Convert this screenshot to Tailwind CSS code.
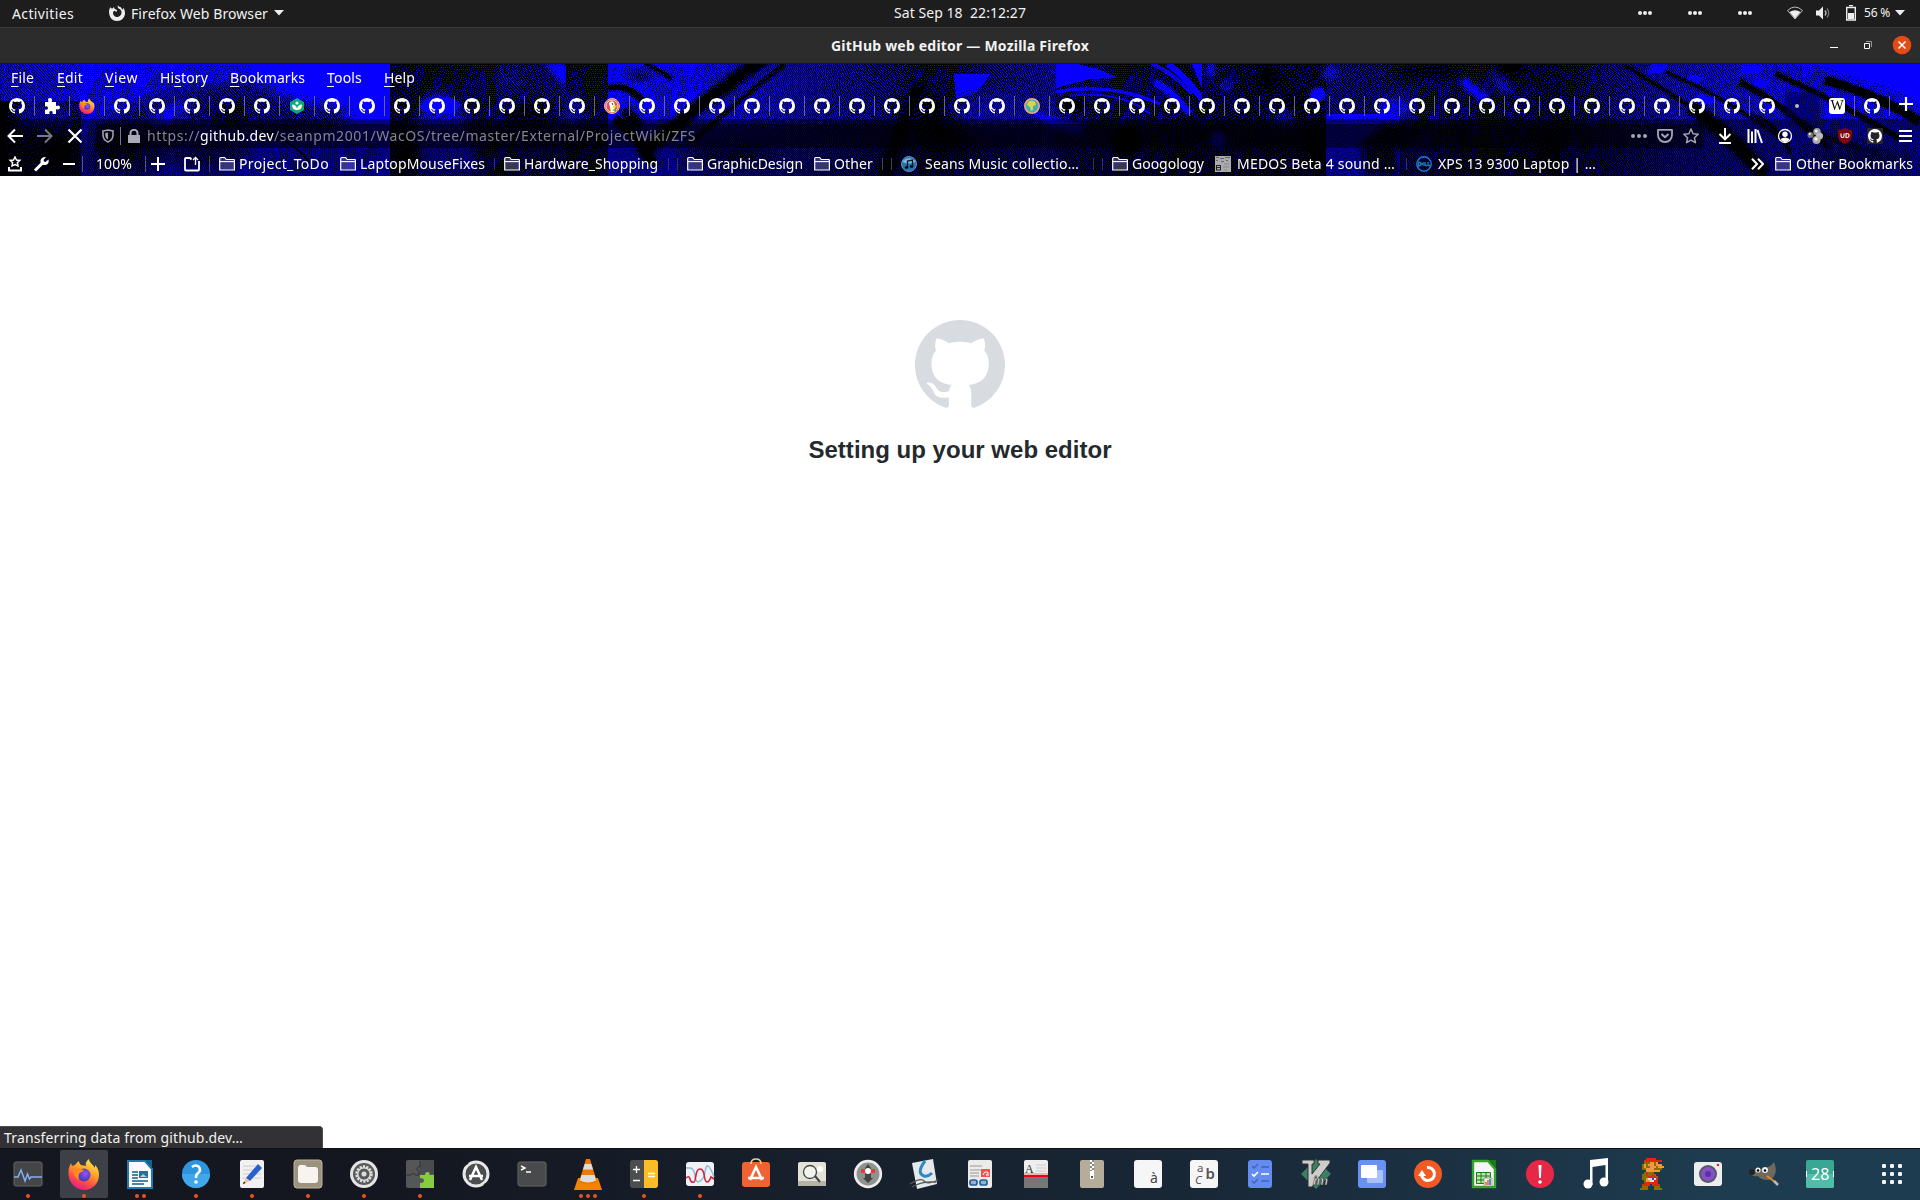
<!DOCTYPE html>
<html lang="en">
<head>
<meta charset="utf-8">
<title>GitHub web editor</title>
<script src="https://cdn.jsdelivr.net/npm/@tailwindcss/browser@4"></script>
</head>
<body class="w-[1920px] h-[1200px] overflow-hidden flex flex-col bg-white text-[14px] text-[#f2f2f2] font-['Noto_Sans',sans-serif]">

<svg class="absolute size-0">
  <symbol id="gh" viewBox="0 0 16 16"><path d="M8 0C3.58 0 0 3.58 0 8c0 3.54 2.29 6.53 5.47 7.59.4.07.55-.17.55-.38 0-.19-.01-.82-.01-1.49-2.01.37-2.53-.49-2.69-.94-.09-.23-.48-.94-.82-1.13-.28-.15-.68-.52-.01-.53.63-.01 1.08.58 1.23.82.72 1.21 1.87.87 2.33.66.07-.52.28-.87.51-1.07-1.78-.2-3.64-.89-3.64-3.95 0-.87.31-1.59.82-2.15-.08-.2-.36-1.02.08-2.12 0 0 .67-.21 2.2.82.64-.18 1.32-.27 2-.27s1.36.09 2 .27c1.53-1.04 2.2-.82 2.2-.82.44 1.1.16 1.92.08 2.12.51.56.82 1.27.82 2.15 0 3.07-1.87 3.75-3.65 3.95.29.25.54.73.54 1.48 0 1.07-.01 1.93-.01 2.2 0 .21.15.46.55.38A8.01 8.01 0 0 0 16 8c0-4.42-3.58-8-8-8z"/></symbol>
  <symbol id="folder" viewBox="0 0 16 16"><path d="M.7 14V2.500c0-.6.3-1 1-1h4l1.500 2h7.600c.4 0 .6.3.6.7V14z" fill="#8c8cc860" stroke="#fff" stroke-width="1.200"/><path d="M1 5.600h14.400" stroke="#fff" stroke-width="1.100"/></symbol>
  <linearGradient id="fx" x1=".8" y1="0" x2=".3" y2="1"><stop offset="0" stop-color="#fff04a"/><stop offset=".4" stop-color="#ffa02a"/><stop offset=".7" stop-color="#ff4f45"/><stop offset="1" stop-color="#e8168c"/></linearGradient>
  <radialGradient id="fp" cx=".6" cy=".4"><stop offset="0" stop-color="#8f58f0"/><stop offset="1" stop-color="#4f3cc0"/></radialGradient>
  <symbol id="firefox" viewBox="0 0 32 32"><path d="M21 1c-3 2-4 5-3 7l-5-1c-1-1-2-2-2-4-2 1-3 3-4 4L4 8 3 5C0 10 0 15 1 20c2 7 8 12 15 12 9 0 15-7 15-15 0-4-1-7-4-10l0 3C25 6 21 5 21 1z" fill="url(#fx)"/><circle cx="16" cy="17" r="6.500" fill="url(#fp)"/><path d="M5 11c4-2 7 0 11 1-1 2-4 2-5 4 0 1-1 4 0 6-4-2-6-6-6-11z" fill="#ff8a22"/></symbol>
</svg>

<!-- shell top bar -->
<header class="h-7 shrink-0 bg-[#1d1d1d] border-b border-[#3b3b3b] flex items-center pb-px">
  <span data-fit="62" class="ml-3 w-[97px]">Activities</span>
  <svg class="size-4 mr-[6px]" viewBox="0 0 16 16"><path d="M9 0c-.6 1.500-.3 2.700.5 3.500 2 .5 3.200 2.200 3 4.200C12.300 10.300 10.300 12 8 12s-4-1.700-4-4c0-1 .5-2 1.500-2.300L7.500 7 8 5 5.500 3.800 5 2 3.500 3.500 2 3.200 1.500 2C-.5 5-.3 9 1.200 12c1.300 2.400 4 4 6.800 4 4.500 0 8-3.500 8-8 0-2-.7-4-2-5.200L13.800 5 11.500 2C10 2 9 1 9 0z" fill="#eee"/></svg>
  <span data-fit="137" class="w-[143px]">Firefox Web Browser</span>
  <svg class="w-[10px] h-[6px]" viewBox="0 0 10 6"><path d="M0 0h10L5 5.500z" fill="#eee"/></svg>
  <span data-fit="132" class="ml-[610px] w-[132px] whitespace-pre pb-px">Sat Sep 18  22:12:27</span>
  <svg class="ml-[612px] w-[114px] h-1" viewBox="0 0 114 4" fill="#eee"><circle cx="2" cy="2" r="2"/><circle cx="7" cy="2" r="2"/><circle cx="12" cy="2" r="2"/><circle cx="52" cy="2" r="2"/><circle cx="57" cy="2" r="2"/><circle cx="62" cy="2" r="2"/><circle cx="102" cy="2" r="2"/><circle cx="107" cy="2" r="2"/><circle cx="112" cy="2" r="2"/></svg>
  <svg class="ml-[35px] w-4 h-[14px]" viewBox="0 0 16 14"><path d="M.5 4.500Q8-2.500 15.500 4.500L8 13z" fill="none" stroke="#bbb"/><path d="M2.500 6Q8 2.500 13.500 6L8 12.500z" fill="#eee"/></svg>
  <svg class="ml-3 w-4 h-[14px]" viewBox="0 0 16 14"><path d="M1 4.500h3L8 .5v13l-4-4H1z" fill="#eee"/><path d="M10 4.500q2 2.500 0 5" fill="none" stroke="#bbb" stroke-width="1.300"/><path d="M12 2.500q3.500 4.500 0 9" fill="none" stroke="#777" stroke-width="1.300"/></svg>
  <svg class="ml-[15px] w-[10px] h-4" viewBox="0 0 10 16"><path d="M3 .5h4M.7 2.500h8.600v12.500H.7z" fill="none" stroke="#eee" stroke-width="1.400"/><path d="M2 8h6v6H2z" fill="#eee"/></svg>
  <span data-fit="26" class="ml-2 w-[31px] text-[12px]">56 %</span>
  <svg class="w-[10px] h-[6px]" viewBox="0 0 10 6"><path d="M0 0h10L5 5.500z" fill="#eee"/></svg>
</header>

<!-- window title bar -->
<div class="h-9 shrink-0 bg-[#2c2c2c] border-b border-[#161616] flex items-center">
  <span data-fit="258" class="ml-[831px] w-[258px] font-bold">GitHub web editor — Mozilla Firefox</span>
  <i class="ml-[741px] mt-1 w-2 h-px bg-white"></i>
  <svg class="ml-[26px] mb-[2px] size-2" viewBox="0 0 8 8" fill="none"><path d="M.5 2.500h5v5h-5z" stroke="#fff"/><path d="M2 .5h5.500V6" stroke="#999"/></svg>
  <svg class="ml-5 mb-[2px] size-5" viewBox="0 0 20 20"><circle cx="10" cy="10" r="9.300" fill="#e24c18"/><path d="M6.500 6.500l7 7m0-7l-7 7" stroke="#fff" stroke-width="1.500"/></svg>
</div>

<!-- browser chrome -->
<div class="relative h-28 shrink-0 bg-black text-white">
  <canvas id="sky" width="1920" height="112" class="absolute inset-0"></canvas>
  <div class="relative flex flex-col h-28">
    <nav class="h-7 flex items-center pl-[11px] pb-[2px] underline-offset-[3px]">
      <span data-fit="23" class="w-[46px]"><u>F</u>ile</span><span data-fit="26" class="w-12"><u>E</u>dit</span><span data-fit="33" class="w-[55px]"><u>V</u>iew</span><span data-fit="48" class="w-[70px]">Hi<u>s</u>tory</span><span data-fit="75" class="w-[97px]"><u>B</u>ookmarks</span><span data-fit="35" class="w-[57px]"><u>T</u>ools</span><span data-fit="31"><u>H</u>elp</span>
    </nav>
    <div id="tabs" class="h-[27px] flex items-center"></div>

    <div class="h-[33px] flex items-center bg-black/45 pl-[7px]">
      <svg class="size-4" viewBox="0 0 16 16" fill="none" stroke="#fff" stroke-width="2"><path d="M16 8H1.500M8 1.500L1.500 8 8 14.500"/></svg>
      <svg class="ml-[14px] size-4" viewBox="0 0 16 16" fill="none" stroke="#77778c" stroke-width="2"><path d="M0 8h14.500M8 1.500L14.500 8 8 14.500"/></svg>
      <svg class="ml-[14px] size-4" viewBox="0 0 16 16" stroke="#fff" stroke-width="2.200"><path d="M1.500 1.500l13 13m0-13l-13 13"/></svg>
      <div class="ml-[13px] h-6 w-[1608px] rounded-xs bg-black/55 flex items-center pl-[6px]">
        <svg class="w-3 h-[14px]" viewBox="0 0 12 14"><path d="M1 2l5-1 5 1v4c0 3.500-2 5.700-5 7C3 11.700 1 9.500 1 6z" fill="none" stroke="#a0a0aa" stroke-width="1.600"/><path d="M6 3.500v7C4 9.500 3.300 8 3.300 6V4z" fill="#a0a0aa"/></svg>
        <i class="ml-[6px] w-px h-[18px] bg-[#77778a]"></i>
        <svg class="ml-[7px] w-3 h-[14px]" viewBox="0 0 12 14"><path d="M0 6h12v8H0z" fill="#a9a9b8"/><path d="M2.500 7V4a3.500 3.200 0 0 1 7 0v3" fill="none" stroke="#a9a9b8" stroke-width="2"/></svg>
        <span class="ml-[7px] flex text-[#85858a]"><span data-fit="53" class="w-[53px]">https://</span><span data-fit="74" class="w-[74px] text-white">github.dev</span><span data-fit="422" class="w-[422px]">/seanpm2001/WacOS/tree/master/External/ProjectWiki/ZFS</span></span>
        <svg class="ml-[935px] w-4 h-1" viewBox="0 0 16 4" fill="#a5a5b0"><circle cx="2" cy="2" r="2"/><circle cx="8" cy="2" r="2"/><circle cx="14" cy="2" r="2"/></svg>
        <svg class="ml-[10px] size-4" viewBox="0 0 16 16" fill="none" stroke="#a5a5b0" stroke-width="1.800" stroke-linejoin="round"><path d="M1 1.800h14V7c0 4-3 7-7 7S1 11 1 7z"/><path d="M4.500 6L8 9.300 11.500 6" stroke-width="2"/></svg>
        <svg class="ml-[10px] size-4" viewBox="0 0 16 16" fill="none" stroke="#a5a5b0" stroke-width="1.500" stroke-linejoin="round"><path d="M8 1l2.100 4.700 5.100.6-3.800 3.400 1 5L8 12.200 3.600 14.700l1-5L.8 6.300l5.100-.6z"/></svg>
      </div>
      <svg class="ml-[13px] size-4" viewBox="0 0 16 16" fill="none" stroke="#fff" stroke-width="2"><path d="M8 0v11M2.500 6L8 11.300 13.500 6M2 15h12"/></svg>
      <svg class="ml-[14px] size-4" viewBox="0 0 16 16" stroke="#fff" stroke-width="2"><path d="M1.500 1v14M5 3.500V15M8.500 1v14M10.500 2l4.500 13"/></svg>
      <svg class="ml-[14px] size-4" viewBox="0 0 16 16"><circle cx="8" cy="8" r="6.500" fill="none" stroke="#fff" stroke-width="1.300"/><circle cx="8" cy="6.300" r="2.700" fill="#fff"/><path d="M3.500 11q4.500-3 9 0-1.500 3-4.500 3t-4.500-3z" fill="#fff"/></svg>
      <svg class="ml-[14px] size-4" viewBox="0 0 16 16"><circle cx="3.500" cy="7" r="3" fill="#777"/><circle cx="2.800" cy="6" r="1" fill="#fff"/><circle cx="10" cy="3.800" r="3.800" fill="#999"/><circle cx="9.200" cy="3" r="1.600" fill="#eee"/><circle cx="12.500" cy="8" r="3.500" fill="#bbb"/><circle cx="9.500" cy="12" r="4" fill="#aaa"/><circle cx="9" cy="11" r="1.800" fill="#f4f4f4"/></svg>
      <svg class="ml-[14px] size-4" viewBox="0 0 16 16"><path d="M8 0q3.500 2 7 2v6q0 5-7 8-7-3-7-8V2q3.500 0 7-2z" fill="#800610"/><path d="M4 5.500v2.500q0 1.500 1.500 1.500T7 8V5.500M9 5.500v4q3 .3 3-2t-3-2z" fill="none" stroke="#fff" stroke-width="1.100"/></svg>
      <span class="ml-[14px] size-4 bg-[#24242a]"><svg class="size-4 p-px" fill="#fff"><use href="#gh"/></svg></span>
      <svg class="ml-[16px] w-[13px] h-3" viewBox="0 0 13 12" stroke="#fff" stroke-width="2"><path d="M0 1h13M0 6h13M0 11h13"/></svg>
    </div>

    <!-- bookmarks toolbar -->
    <div class="h-6 flex items-center bg-black/45 pl-[7px] [&>span]:pb-[2px]">
      <svg class="size-4" viewBox="0 0 16 16" fill="none" stroke="#fff" stroke-width="1.500"><path d="M8 1l1.500 3 3.300.4-2.400 2.300.6 3.300L8 8.500 5 10l.6-3.300-2.400-2.300L6.500 4z"/><path d="M2 11v3.500h12V11" stroke-width="2"/></svg>
      <svg class="ml-[10px] size-4" viewBox="0 0 16 16"><path d="M2 14.500L9.500 7" stroke="#fff" stroke-width="3"/><path d="M13 1L10.500 4l.5 1.500 1.500.5L15.500 3.500Q16.500 8 12.500 9 7 9.500 7.500 4.500 8.500.5 13 1z" fill="#fff"/></svg>
      <i class="ml-[14px] w-3 h-0.5 bg-white"></i><i class="ml-[7px] w-px h-4 bg-[#55557a]"></i>
      <span data-fit="36" class="ml-[13px] w-9">100%</span><i class="ml-[13px] w-px h-4 bg-[#55557a]"></i>
      <svg class="ml-[5px] size-[14px]" viewBox="0 0 14 14" stroke="#fff" stroke-width="2"><path d="M7 0v14M0 7h14"/></svg>
      <svg class="ml-[19px] size-4" viewBox="0 0 16 16" fill="none" stroke="#fff" stroke-width="1.800"><path d="M7.500 3.500L6 2H2q-1 0-1 1v10.500q0 1 1 1h12q1 0 1-1V5"/><path d="M11.500 9V2M9 4l2.500-2.500L14 4" stroke-width="1.300"/></svg>
      <i class="ml-[9px] w-px h-4 bg-[#44446a]"></i>
      <svg class="ml-[9px] size-4"><use href="#folder"/></svg><span data-fit="90" class="ml-1 w-[90px]">Project_ToDo</span>
      <svg class="ml-[11px] size-4"><use href="#folder"/></svg><span data-fit="125" class="ml-1 w-[125px]">LaptopMouseFixes</span>
      <i class="ml-[9px] w-px h-3 bg-[#333350]"></i>
      <svg class="ml-[9px] size-4"><use href="#folder"/></svg><span data-fit="134" class="ml-1 w-[134px]">Hardware_Shopping</span>
      <i class="ml-[10px] w-px h-3 bg-[#333350]"></i><i class="ml-2 w-px h-3 bg-[#333350]"></i>
      <svg class="ml-[9px] size-4"><use href="#folder"/></svg><span data-fit="96" class="ml-1 w-24">GraphicDesign</span>
      <svg class="ml-[11px] size-4"><use href="#folder"/></svg><span data-fit="39" class="ml-1 w-[39px]">Other</span>
      <i class="ml-[9px] w-px h-3 bg-[#444]"></i><i class="ml-2 w-px h-3 bg-[#444]"></i>
      <svg class="ml-[9px] size-4" viewBox="0 0 16 16"><circle cx="8" cy="8" r="7.500" fill="#2473ad" stroke="#6f8ea5"/><path d="M1.500 6a7 6 0 0 1 13 0Q8 9 1.500 6z" fill="#75b5e0"/><path d="M6.500 11.500V5l5-1v6.500" fill="none" stroke="#101820" stroke-width="1.300"/><ellipse cx="5.500" cy="11.500" rx="1.800" ry="1.300"/><ellipse cx="10.500" cy="10.500" rx="1.800" ry="1.300"/></svg>
      <span data-fit="154" class="ml-2 w-[154px]">Seans Music collectio…</span>
      <i class="ml-[14px] w-px h-3 bg-[#333350]"></i><i class="ml-2 w-px h-3 bg-[#333350]"></i>
      <svg class="ml-[9px] size-4"><use href="#folder"/></svg><span data-fit="72" class="ml-1 w-[72px]">Googology</span>
      <svg class="ml-[11px] size-4" viewBox="0 0 16 16"><path d="M0 0h16v16H0z" fill="#aaa"/><path d="M1 1.500h3m1 1h4m1-1h5M1 4.500h2m3 1h3m2-1h2" stroke="#666"/><path d="M1 9.500h5M1 14h5M1.500 9v5M5.500 9v5M1 11.500h5" stroke="#222"/><path d="M9 8h5M8 11h6M9 14h3" stroke="#888"/></svg>
      <span data-fit="158" class="ml-[6px] w-[158px]">MEDOS Beta 4 sound …</span>
      <i class="ml-[11px] w-px h-3 bg-[#333350]"></i>
      <svg class="ml-[9px] size-4" viewBox="0 0 16 16"><circle cx="8" cy="8" r="7.200" fill="none" stroke="#1e7fc0" stroke-width="1.400"/><path d="M2.500 6v4q2.500 0 2.500-2T2.500 6M8 6.500L6 8l2 1.500M9 6v3.500h2M12 6v3.500h2" fill="none" stroke="#1e7fc0" stroke-width="1.300"/></svg>
      <span data-fit="158" class="ml-[6px] w-[158px]">XPS 13 9300 Laptop | …</span>
      <svg class="ml-[155px] w-[13px] h-3" viewBox="0 0 13 12" fill="none" stroke="#fff" stroke-width="2"><path d="M1 .7L6 6l-5 5.300M7 .7L12 6l-5 5.300"/></svg>
      <svg class="ml-[11px] size-4"><use href="#folder"/></svg><span data-fit="117" class="ml-[5px] w-[117px]">Other Bookmarks</span>
    </div>
  </div>
</div>

<!-- page -->
<main class="grow flex flex-col items-center pt-36">
  <svg class="size-[90px]" fill="#d8dbdf"><use href="#gh"/></svg>
  <h1 class="mt-[22px] text-[24px] leading-9 font-bold text-[#24292e] font-['Liberation_Sans',Arial,sans-serif]"><span data-fit="303">Setting up your web editor</span></h1>
</main>
<div class="h-[22px] w-[323px] shrink-0 rounded-tr-[4px] bg-[#323234] border-t border-r border-[#4c4c4e] flex items-center pl-1"><span data-fit="239">Transferring data from github.dev…</span></div>

<!-- dock -->
<footer id="dock" class="h-[52px] shrink-0 border-t border-[#101014] bg-linear-to-r from-[#141720] from-20% via-[#182635] via-60% to-[#1e3c50] to-90% flex items-center [&>span]:w-14 [&>span]:h-full [&>span]:flex [&>span]:flex-col [&>span]:items-center [&>span]:pt-[9px] [&>span>svg]:size-8 [&>span>svg]:shrink-0">
  <span data-run="1"><svg viewBox="0 0 32 32"><rect x="2" y="4" width="28" height="24" rx="2" fill="#444547" stroke="#666"/><path d="M2 19h4l3-7 4 11 2.500-7 2 5 1.500-2h11" fill="none" stroke="#86aef5" stroke-width="1.500"/></svg></span>
  <span data-run="1" class="relative"><i class="absolute left-1 top-px size-12 rounded-xs bg-[#3d4047]"></i><svg class="relative"><use href="#firefox"/></svg></span>
  <span data-run="2"><svg viewBox="0 0 32 32"><path d="M4 3h17l7 8v19H4z" fill="#fafafa" stroke="#1c7cb0" stroke-width="2"/><path d="M21 2h7v8z" fill="#0e6390"/><path d="M8 14h6M8 17h6M8 20h6M8 23h16M8 26h12" stroke="#155f8c" stroke-width="1.500"/><path d="M15 13h9v7h-9z" fill="#2b6f98"/><path d="M16 19l3-3 4 3z" fill="#a9d0e8"/></svg></span>
  <span data-run="1"><svg viewBox="0 0 32 32"><circle cx="16" cy="16" r="14" fill="#2b95df"/><path d="M2 16a14 14 0 0 0 28 0z" fill="#40a8ea"/><path d="M12 9q4-3 7 0 2.500 3.500-1.500 6.500-1.500 1-1.500 4.500" fill="none" stroke="#fff" stroke-width="2.600"/><circle cx="16" cy="24" r="1.800" fill="#fff"/></svg></span>
  <span data-run="1"><svg viewBox="0 0 32 32"><rect x="4" y="2" width="24" height="28" rx="2" fill="#f1f1f1"/><path d="M7 8h18M7 12h18M7 16h18M7 20h18" stroke="#ccc"/><path d="M10 20L22 6l4 4-12 13z" fill="#2a5fd0"/><path d="M10 20l4 3-7 3z" fill="#f0c49a"/><path d="M7 26l1-2.500 1.500 1.500z"/></svg></span>
  <span data-run="1"><svg viewBox="0 0 32 32"><rect x="2" y="2" width="28" height="28" rx="3" fill="#9c937f" stroke="#bdb59f"/><path d="M7 8q0-1 1-1h5l2 2h8q3 0 3 3v10q0 3-3 3H9q-3 0-3-3V9z" fill="#f7f4ef"/></svg></span>
  <span data-run="1"><svg viewBox="0 0 32 32"><circle cx="16" cy="16" r="14" fill="#e4e4e4"/><circle cx="16" cy="16" r="11" fill="#58595a"/><circle cx="16" cy="16" r="7.500" fill="none" stroke="#ddd" stroke-width="2.500" stroke-dasharray="2.200 1.200"/><circle cx="16" cy="16" r="6.300" fill="none" stroke="#ddd" stroke-width="1.500"/><circle cx="16" cy="16" r="2.500" fill="#ddd"/></svg></span>
  <span data-run="1"><svg viewBox="0 0 32 32"><rect x="2" y="2" width="28" height="28" rx="2" fill="#555657"/><path d="M16 2h14v14H16z" fill="#4a4b4c"/><path d="M16 17h5q0-3 2.500-3t2 3H30v13H16v-5q4 0 4-2.500T16 20z" fill="#86cc3f"/><path d="M2 17h5q1-3 3-1t5 1v-4q-3-1-2-3t3-1V3" fill="none" stroke="#333"/></svg></span>
  <span><svg viewBox="0 0 32 32"><circle cx="16" cy="16" r="12" fill="#4c4d4f" stroke="#e8e8e8" stroke-width="3"/><path d="M10 22l6-13 6 13M9 18h14" fill="none" stroke="#fff" stroke-width="2.500"/><path d="M3 8l5-3M29 24l-5 3" stroke="#222" stroke-width="2"/></svg></span>
  <span><svg viewBox="0 0 32 32"><rect x="2" y="4" width="28" height="24" rx="2" fill="#494a4b" stroke="#666"/><path d="M5 8l4 2-4 2M10 14h5" fill="none" stroke="#fff" stroke-width="1.400"/></svg></span>
  <span data-run="3"><svg viewBox="0 0 32 32"><path d="M6 20h20l4 12H2z" fill="#f58300"/><path d="M14 1h4l7 23q-9 5-18 0z" fill="#f07800"/><path d="M12.700 6h6.600l1.700 5.500H11zM9.500 17h13l1.600 5.500q-8 4-16.200 0z" fill="#ddd"/></svg></span>
  <span data-run="1"><svg viewBox="0 0 32 32"><rect x="2" y="2" width="28" height="28" rx="3" fill="#4c4d4e"/><path d="M16 2h11q3 0 3 3v22q0 3-3 3H16z" fill="#fcbc26"/><path d="M5 11.500h7M8.500 8v7M5 22.500h7M20 15.500h7M20 18.500h7" stroke="#fff" stroke-width="1.300"/></svg></span>
  <span data-run="1"><svg viewBox="0 0 32 32"><rect x="2" y="4" width="28" height="24" rx="3" fill="#f0f1f3"/><path d="M2 10h4q4 0 5 8t5 5q4-2 5-9t3-6q3 2 6 11" fill="none" stroke="#8abbe0" stroke-width="1.500"/><path d="M2 20q3-3 4 1t4 3q1 0 2-7 1-6 4-6t4 5q1 8 3 8t4-5l3 2" fill="none" stroke="#d0213c" stroke-width="1.600"/></svg></span>
  <span><svg viewBox="0 0 32 32"><rect x="2" y="4" width="28" height="25" rx="3" fill="#ef6234"/><path d="M11 6q0-5 5-5t5 5" fill="none" stroke="#e6cf9d" stroke-width="1.700"/><path d="M10 22l6-13 6 13M8 20h16" fill="none" stroke="#fff" stroke-width="2.600"/></svg></span>
  <span><svg viewBox="0 0 32 32"><rect x="2" y="4" width="28" height="24" rx="2" fill="#e2e2d7"/><path d="M2 23h28v5H2z" fill="#b5b3a5"/><circle cx="24" cy="11" r="3" fill="#fff"/><circle cx="14" cy="14" r="6.500" fill="#f3f3ee" stroke="#444" stroke-width="1.300"/><path d="M19 18l5 6" stroke="#444" stroke-width="2"/></svg></span>
  <span><svg viewBox="0 0 32 32"><circle cx="16" cy="16" r="12.800" fill="#8e938e" stroke="#ececec" stroke-width="2.700"/><path d="M16 6l3 4v10h2l-5 5-5-5h2V10z" fill="#444"/><path d="M9 11h14v4H9z" fill="#e83944"/><circle cx="16" cy="13" r="3" fill="#fff"/></svg></span>
  <span><svg viewBox="0 0 32 32"><path d="M4 5l21-4 4 25-20 5z" fill="#e6e9eb"/><path d="M17 3q-9 12-1 15 4 1 8-3" fill="none" stroke="#2b8ac2" stroke-width="3"/><path d="M2 26q11-7 14-3t14-1M4 29q10-6 24-5" fill="none" stroke="#555" stroke-width="1.300"/></svg></span>
  <span><svg viewBox="0 0 32 32"><rect x="4" y="2" width="24" height="28" rx="2" fill="#ebebea"/><path d="M6 8h12M6 12h18M6 15h9M6 18h9" stroke="#999"/><path d="M17 11h9v8h-9z" fill="#e9564d"/><path d="M19 17q1-4 4-3t-1 3h3" fill="none" stroke="#fff"/><rect x="6" y="22" width="7" height="5" rx="2" fill="#aac" stroke="#2160a0" stroke-width="1.700"/><rect x="16" y="22" width="7" height="5" rx="2" fill="#aac" stroke="#2160a0" stroke-width="1.700"/></svg></span>
  <span><svg viewBox="0 0 32 32"><rect x="4" y="2" width="24" height="28" rx="2" fill="#eee"/><path d="M4 19h24v9q0 2-2 2H6q-2 0-2-2z" fill="#777"/><path d="M16 7h10M16 10h10M16 13h10" stroke="#ccc"/><text x="5" y="15" font-size="12" font-family="Liberation Serif, serif" fill="#333">A</text><path d="M4 18h24" stroke="#f00018" stroke-width="2"/><path d="M4 16h24" stroke="#f7b0b0" stroke-width="2"/></svg></span>
  <span><svg viewBox="0 0 32 32"><rect x="4" y="2" width="24" height="28" rx="2" fill="#b5ad9a"/><path d="M16 2v13" stroke="#888" stroke-width="4"/><path d="M15 2v13" stroke="#fff" stroke-width="2" stroke-dasharray="2 2"/><path d="M17 4v11" stroke="#fff" stroke-width="2" stroke-dasharray="2 2"/><path d="M14 13h4v8h-4z" fill="#fff"/><path d="M15 18h2v2h-2z" fill="#555"/></svg></span>
  <span><svg viewBox="0 0 32 32"><rect x="2" y="2" width="28" height="28" rx="3" fill="#f6f6f6"/><text x="18" y="25" font-size="14" font-family="Noto Sans, sans-serif" fill="#444">à</text></svg></span>
  <span><svg viewBox="0 0 32 32"><rect x="2" y="2" width="28" height="28" rx="3" fill="#f6f6f6"/><g font-family="Noto Sans, sans-serif" fill="#555"><text x="9" y="14" font-size="11.500">a</text><text x="7" y="26" font-size="11.500" font-style="italic">C</text><text x="17.500" y="21" font-size="15" font-weight="600">b</text></g></svg></span>
  <span><svg viewBox="0 0 32 32"><rect x="4" y="2" width="24" height="28" rx="3" fill="#648cf0"/><path d="M8 8l2 2 4-4M17 9h8M8 23l2 2 4-4M17 23h8" fill="none" stroke="#3f63b8" stroke-width="1.400"/><path d="M8 16l2 2 4-4M17 16h8" fill="none" stroke="#fff" stroke-width="1.600"/></svg></span>
  <span><svg viewBox="0 0 32 32"><path d="M16 1l15 15-15 15L1 16z" fill="#3b7f62"/><path d="M2 2h12v4h-2v10L20 6h-2V2h12v3L12 29H8V6H2z" fill="#ccc" stroke="#333"/><text x="13" y="27" font-size="13" font-weight="bold" font-style="italic" font-family="Liberation Sans, sans-serif" fill="#e2e2e2" stroke="#222" stroke-width=".5">im</text></svg></span>
  <span><svg viewBox="0 0 32 32"><rect x="2" y="2" width="28" height="28" rx="3" fill="#6990f3"/><rect x="11" y="12" width="16" height="13" rx="1" fill="#a9c0fb"/><rect x="5" y="7" width="16" height="13" rx="1" fill="#fff"/></svg></span>
  <span><svg viewBox="0 0 32 32"><circle cx="16" cy="16" r="14" fill="#f05a24"/><path d="M15 9.500a6.500 6.500 0 1 1-5.500 7.500" fill="none" stroke="#fff" stroke-width="3"/><path d="M6 18l4-6 4 6z" fill="#fff"/></svg></span>
  <span><svg viewBox="0 0 32 32"><path d="M5 3h15l7 8v18H5z" fill="#f5f5f5" stroke="#37a52c" stroke-width="2.400"/><path d="M21 2h7v8z" fill="#187c14"/><path d="M8 14h14v12H8z" fill="#b9e8a8"/><path d="M8.500 14.500h14v11h-14zM8 18h14M8 22h14M13 14v12M18 14v12" fill="none" stroke="#1c7a18"/><path d="M16 20h8v8h-8z" fill="#eee" stroke="#777" stroke-width=".6"/><path d="M18 27v-3M20 27v-5" stroke="#e07020" stroke-width="1.600"/><path d="M22 27v-6" stroke="#2b78c0" stroke-width="1.600"/></svg></span>
  <span><svg viewBox="0 0 32 32"><circle cx="16" cy="16" r="14" fill="#e62746"/><path d="M14.500 7h3l-.6 13h-1.800z" fill="#fff"/><circle cx="16" cy="24" r="1.800" fill="#fff"/></svg></span>
  <span><svg viewBox="0 0 32 32" fill="#fff"><path d="M10 2l18-2v24h-2.500V7L12.500 9v18H10z"/><circle cx="8" cy="26" r="4.500"/><circle cx="24" cy="24" r="4.500"/></svg></span>
  <span><svg id="sprite" viewBox="0 0 32 32" shape-rendering="crispEdges"></svg></span>
  <span><svg viewBox="0 0 32 32"><rect x="2" y="4" width="28" height="24" rx="3" fill="#ededed"/><circle cx="16" cy="16" r="9" fill="#555a66"/><circle cx="16" cy="16" r="7" fill="#8550c8"/><circle cx="16" cy="16" r="3" fill="#5d31a4"/><circle cx="26" cy="7" r="1.200" fill="#d22"/></svg></span>
  <span><svg viewBox="0 0 32 32"><path d="M4 12q5 1 9-1 9-1 13-7 3 8 1 12-2 6-8 6-6 0-9-4-5 1-6-1z" fill="#6f685c"/><circle cx="4" cy="14" r="3" fill="#222"/><circle cx="10" cy="12" r="2.600" fill="#eee"/><circle cx="17" cy="12" r="3" fill="#eee"/><circle cx="10" cy="12.500" r="1.200"/><circle cx="17" cy="12.500" r="1.200"/><path d="M19 18l8 6" stroke="#e08a2a" stroke-width="2"/><path d="M26 23l4 4" stroke="#bbb" stroke-width="2.500"/></svg></span>
  <span><svg viewBox="0 0 32 32"><rect x="2" y="2" width="28" height="28" rx="2" fill="#3aa795"/><path d="M2 16h28v12q0 2-2 2H4q-2 0-2-2z" fill="#50bda8"/><path d="M2.500 13v6M29.500 13v6" stroke="#fff"/><text x="7" y="22" font-size="16" font-family="Noto Sans, sans-serif" fill="#fff">28</text></svg></span>
  <svg class="ml-[33px] mb-px size-[22px]" viewBox="0 0 22 22" fill="#f2f2f2"><rect x="1" y="1" width="4" height="4" rx="1"/><rect x="9" y="1" width="4" height="4" rx="1"/><rect x="17" y="1" width="4" height="4" rx="1"/><rect x="1" y="9" width="4" height="4" rx="1"/><rect x="9" y="9" width="4" height="4" rx="1"/><rect x="17" y="9" width="4" height="4" rx="1"/><rect x="1" y="17" width="4" height="4" rx="1"/><rect x="9" y="17" width="4" height="4" rx="1"/><rect x="17" y="17" width="4" height="4" rx="1"/></svg>
</footer>

<script>
// Tab strip: 54 pinned tabs, 35px each
const special = {
  1: '<svg class="size-4" viewBox="0 0 16 16" fill="#fff"><path d="M1 4h3.500Q3 0 6 0t1.700 4H12v4q4-1.500 4 1.500T12 11v5H8.500q.7-3-1.500-3t-1.500 3H1v-4.500q3 .8 3-1.500T1 8.500z"/></svg>',
  2: '<svg class="size-4"><use href="#firefox"/></svg>',
  8: '<svg class="size-4" viewBox="0 0 16 16"><path d="M8 0l7 4v8l-7 4-7-4V4z" fill="#12a67c"/><path d="M3 6.500q4 0 5 4 1-4 5-4 0 5.500-5 5.500T3 6.500z" fill="#fff"/><circle cx="8" cy="5" r="1.600" fill="#fff"/></svg>',
  17: '<svg class="size-4" viewBox="0 0 16 16"><circle cx="8" cy="8" r="7.500" fill="#de5833" stroke="#f3b7a5"/><circle cx="8" cy="8" r="6" fill="none" stroke="#fff" stroke-width=".8"/><path d="M5 5q2-3 5-1l1 4-1 6H7z" fill="#fff"/><path d="M9 8l4-.5-1 2H9z" fill="#fc3"/><path d="M8 12l4-1v3z" fill="#5a4"/><circle cx="8.500" cy="6" r=".7"/></svg>',
  29: '<svg class="size-4" viewBox="0 0 16 16"><circle cx="8" cy="8" r="7.200" fill="#3cb0b8" stroke="#f0a58c" stroke-width="1.600"/><path d="M4 4q4-3 7 0l1 3-3 1v4l-2 1-1-4-3-2z" fill="#d5d648"/></svg>',
  51: '<i class="size-1 rounded-full bg-[#bbb] mr-3"></i>',
  52: '<b class="size-4 rounded-[3px] bg-white text-black text-[14px] leading-4 text-center font-normal font-[Liberation_Serif,serif]">W</b>'
};
let strip = '';
for (let i = 0; i < 54; i++) {
  const icon = special[i] || '<svg class="size-4" fill="#fff"><use href="#gh"/></svg>';
  strip += i === 51
    ? '<div class="w-[35px] h-full flex items-center justify-center bg-[#00004699]">' + icon + '</div>'
    : '<div class="w-[35px] h-full flex items-center justify-end">' + icon + '<i class="ml-[9px] w-px h-5 ' + (i === 50 ? 'bg-transparent' : 'bg-[#66668a]') + '"></i></div>';
}
strip += '<svg class="ml-[9px] mb-1 size-[14px]" viewBox="0 0 14 14" stroke="#fff" stroke-width="2.200"><path d="M7 0v14M0 7h14"/></svg>';
document.getElementById('tabs').innerHTML = strip;

// Running-window dots under dock icons
document.querySelectorAll('[data-run]').forEach(s => {
  const d = '<i class="size-1 rounded-full bg-[#ea5420]"></i>';
  s.insertAdjacentHTML('beforeend', '<b class="relative mt-[4px] flex gap-[3px]">' + d.repeat(+s.dataset.run) + '</b>');
});

// Pixel sprite
const rows = ['...RRRRR....','..RRRRRRRRR.','..BBBSSBS...','.BSBSSSBSSS.','.BSBBSSSBSSS','.BBSSSSBBBB.','...SSSSSSS..','..BRBBB.....','.BBRBBRB....','.BBBRRRRB...','.BBSWWUWR...','..BSSWWRR...','..RRRRRRR...','.RRRR.RRRR..','.BBB...BBB..','BBBB...BBBB.'];
const ink = {R: '#dc2a10', B: '#857000', S: '#f0983c', W: '#ddd', U: '#4040e0'};
document.getElementById('sprite').innerHTML = rows.map((r, y) => [...r].map((c, x) => ink[c] ? `<rect x="${4 + x * 2}" y="${y * 2}" width="2" height="2" fill="${ink[c]}"/>` : '').join('')).join('');

// Theme backdrop: grey tones painted, then error-diffused to black and blue
const cv = document.getElementById('sky'), g = cv.getContext('2d', {willReadFrequently: true});
const tone = v => { const n = Math.round(v * 255); return `rgb(${n},${n},${n})`; };
function box(x0, y0, x1, y1, a, b = a) {
  const gr = g.createLinearGradient(x0, 0, x1, 0);
  gr.addColorStop(0, tone(a)); gr.addColorStop(1, tone(b));
  g.fillStyle = gr; g.fillRect(x0, y0, x1 - x0, y1 - y0);
}
function poly(v, blur, ...p) {
  g.filter = blur ? `blur(${blur}px)` : 'none'; g.fillStyle = tone(v); g.beginPath();
  for (let i = 0; i < p.length; i += 2) g.lineTo(p[i], p[i + 1]);
  g.fill(); g.filter = 'none';
}
function line(v, w, blur, x0, y0, cx, cy, x1, y1) {
  g.filter = blur ? `blur(${blur}px)` : 'none'; g.strokeStyle = tone(v); g.lineWidth = w;
  g.beginPath(); g.moveTo(x0, y0); g.quadraticCurveTo(cx, cy, x1, y1); g.stroke(); g.filter = 'none';
}
function spot(v, x, y, rx, ry, blur = 3, rot = 0) {
  g.filter = `blur(${blur}px)`; g.fillStyle = tone(v); g.beginPath(); g.ellipse(x, y, rx, ry, rot, 0, 7); g.fill(); g.filter = 'none';
}
function within(x0, x1, f) { g.save(); g.beginPath(); g.rect(x0, 0, x1 - x0, 112); g.clip(); f(); g.restore(); }
within(0, 390, () => {
  box(0, 0, 390, 112, .68, 1);
  box(250, 0, 390, 60, 1);
  poly(.35, 6, 95, 60, 150, 32, 205, 20, 250, 16, 285, 34, 345, 46, 350, 62, 300, 75, 200, 60, 150, 112, 90, 112);
  spot(.1, 228, 50, 24, 12, 7); spot(.9, 170, 50, 22, 8, 5, -.5); spot(.1, 120, 85, 22, 14, 7); spot(.35, 210, 90, 40, 16, 7);
  spot(.75, 330, 95, 60, 25, 8); line(.1, 2, 0, 250, 60, 300, 80, 310, 100);
  box(0, 37, 81, 112, .02, .2); spot(.5, 45, 50, 30, 14, 6); spot(0, 60, 90, 18, 20, 6);
  box(0, 0, 81, 37, .6, .72);
});
within(390, 566, () => { box(390, 0, 566, 112, .13, .33); poly(.7, 5, 405, 112, 425, 35, 440, 26, 460, 42, 480, 112); spot(1, 440, 42, 20, 9, 1); spot(.02, 408, 95, 14, 20, 4); poly(1, 2, 545, 0, 566, 0, 566, 24); spot(.4, 510, 15, 15, 12, 6); spot(.03, 530, 50, 26, 12, 6); });
within(566, 608, () => { box(566, 0, 608, 112, .18, .22); spot(.5, 570, 50, 14, 20, 6); });
within(608, 1056, () => {
  box(608, 0, 800, 112, .95, .5); box(800, 0, 920, 112, .5, .25); box(920, 0, 1056, 112, .18, .48);
  line(0, 7, 1, 608, 25, 625, 18, 644, 38); line(.05, 5, 1, 645, 0, 660, 6, 672, 16); spot(0, 632, 55, 14, 8, 3, .8); spot(.4, 640, 12, 14, 7, 3);
  line(0, 15, 2, 765, -6, 700, 40, 640, 92); line(.05, 5, 1, 785, 0, 735, 40, 690, 80); line(0, 10, 1, 615, 55, 635, 70, 655, 102);
  spot(.2, 730, 92, 45, 12, 8); line(0, 15, 3, 920, 20, 905, 60, 885, 112); spot(.03, 945, 60, 30, 30, 10);
  poly(1, 0, 954, 10, 990, 10, 982, 22, 974, 31, 956, 34); spot(.55, 990, 50, 40, 20, 8);
});
within(1056, 1202, () => {
  box(1056, 0, 1202, 112, .33, .15); poly(1, 0, 1056, 0, 1078, 0, 1100, 6, 1118, 14, 1090, 15, 1056, 24);
  line(1, 3, 0, 1056, 28, 1110, 18, 1160, 40); line(.8, 2, 0, 1070, 32, 1120, 26, 1150, 50); line(1, 7, 1, 1155, 18, 1175, 30, 1190, 50);
  line(1, 6, 0, 1168, 0, 1185, 12, 1202, 35); line(.9, 4, 0, 1152, 0, 1175, 10, 1192, 30); poly(1, 0, 1192, 0, 1202, 0, 1202, 24); spot(0, 1075, 42, 14, 8, 3);
});
within(1020, 1085, () => poly(1, 2, 1030, 46, 1060, 55, 1082, 60, 1082, 72, 1050, 64));
within(1075, 1170, () => spot(0, 1127, 78, 16, 16, 2));
within(1202, 1366, () => { box(1202, 0, 1326, 112, .17, .14); box(1326, 0, 1366, 112, .3); spot(.9, 1211, 6, 5, 7, 3); spot(.8, 1226, 22, 6, 5, 3); spot(.95, 1330, 10, 7, 5, 3); spot(1, 1318, 31, 8, 7, 1); spot(0, 1268, 15, 10, 14, 4); spot(.95, 1218, 76, 8, 8, 2); spot(0, 1318, 85, 14, 22, 5); spot(0, 1290, 45, 14, 12, 5); spot(.5, 1285, 55, 12, 10, 5); });
within(1326, 1560, () => {
  box(1326, 0, 1560, 112, .34, .14); box(1326, 50, 1400, 112, .9, .95); box(1400, 55, 1472, 112, .4, .15);
  poly(.15, 3, 1385, 58, 1360, 80, 1366, 112, 1400, 112, 1395, 90, 1440, 58); spot(.9, 1395, 45, 16, 10, 5);
  spot(.95, 1330, 10, 7, 5, 3);
  line(1, 8, 2, 1463, 16, 1470, 25, 1486, 35); line(.8, 9, 3, 1495, 5, 1500, 18, 1508, 28); spot(0, 1510, 6, 18, 8, 5); spot(0, 1430, 8, 35, 6, 5); spot(0, 1560, 90, 22, 22, 8);
});
within(1560, 1920, () => {
  box(1560, 0, 1660, 112, .16, .48); box(1660, 0, 1820, 112, .52, .75); box(1820, 0, 1920, 112, .75, .8);
  poly(1, 5, 1800, -5, 1930, -5, 1930, 48, 1890, 26, 1840, 12);
  for (const [x, y, w] of [[1652, 5, 16], [1690, 16, 14], [1700, 36, 16], [1745, 6, 18], [1755, 20, 16], [1770, 42, 14], [1830, 50, 16]]) poly(1, 1, x, y - 5, x + w, y - 4, x + w - 4, y + 4, x - 6, y + 5);
  line(0, 4, 1, 1625, 2, 1680, 35, 1730, 70); line(0, 4, 1, 1665, 8, 1720, 30, 1790, 80);
  line(0, 6, 1, 1775, 10, 1840, 38, 1900, 75); line(0, 10, 1, 1825, 16, 1880, 32, 1920, 58); line(0, 7, 1, 1740, 18, 1790, 45, 1830, 85);
  line(0, 16, 2, 1690, 42, 1740, 80, 1765, 112); line(.1, 6, 2, 1800, 60, 1835, 80, 1880, 90); line(.1, 5, 1, 1750, 50, 1780, 60, 1790, 90);
  spot(.35, 1860, 95, 55, 12, 8);
});
const W = 1920, H = 112, im = g.getImageData(0, 0, W, H), px = im.data, t = new Float32Array(W * (H + 1) + 2);
for (let i = 0; i < W * H; i++) t[i] = px[i * 4] / 255;
for (let i = 0; i < W * H; i++) {
  const on = t[i] > .5, e = t[i] - (on ? 1 : 0), k = i * 4;
  t[i + 1] += e * 7 / 16; t[i + W - 1] += e * 3 / 16; t[i + W] += e * 5 / 16; t[i + W + 1] += e / 16;
  px[k] = on ? 8 : 0; px[k + 1] = 0; px[k + 2] = on ? 255 : 0;
}
g.putImageData(im, 0, 0);

// Tracking: spread each label over its designed width
function fitLabels() {
  document.querySelectorAll('[data-fit]').forEach(e => {
    e.style.whiteSpace = 'pre';
    e.style.letterSpacing = '0px';
    const r = document.createRange(); r.selectNodeContents(e);
    const w = r.getBoundingClientRect().width;
    e.style.letterSpacing = ((+e.dataset.fit - w) / e.textContent.length).toFixed(3) + 'px';
  });
}
fitLabels();
addEventListener('load', () => { fitLabels(); requestAnimationFrame(fitLabels); });
document.fonts.ready.then(fitLabels);
new ResizeObserver(fitLabels).observe(document.querySelector('h1'));
</script>
</body>
</html>
